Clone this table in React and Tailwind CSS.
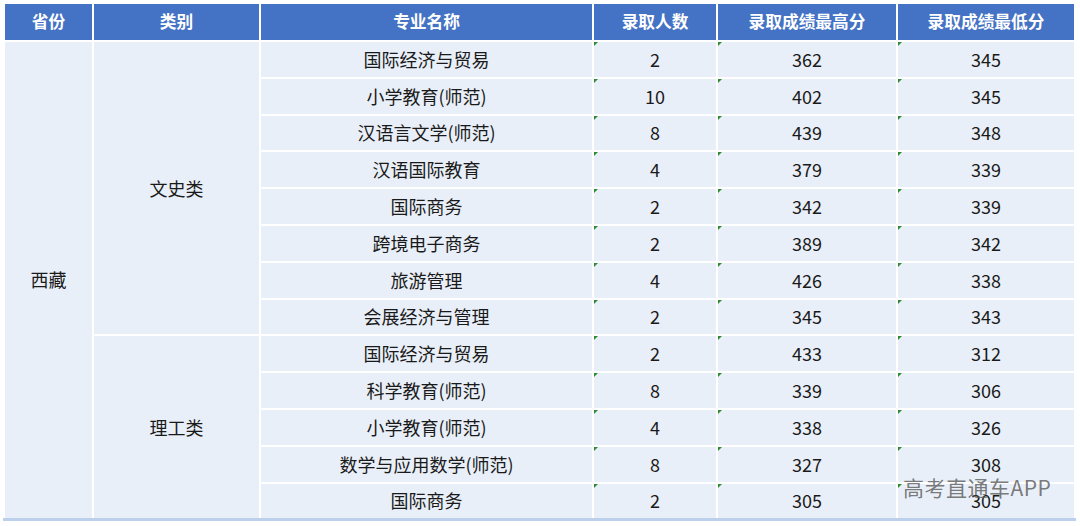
import React from "react";

const wenshi = [
  ["国际经济与贸易", "2", "362", "345"],
  ["小学教育(师范)", "10", "402", "345"],
  ["汉语言文学(师范)", "8", "439", "348"],
  ["汉语国际教育", "4", "379", "339"],
  ["国际商务", "2", "342", "339"],
  ["跨境电子商务", "2", "389", "342"],
  ["旅游管理", "4", "426", "338"],
  ["会展经济与管理", "2", "345", "343"],
];

const ligong = [
  ["国际经济与贸易", "2", "433", "312"],
  ["科学教育(师范)", "8", "339", "306"],
  ["小学教育(师范)", "4", "338", "326"],
  ["数学与应用数学(师范)", "8", "327", "308"],
  ["国际商务", "2", "305", "305"],
];

const headers = ["省份", "类别", "专业名称", "录取人数", "录取成绩最高分", "录取成绩最低分"];

const Mark = () => (
  <span className="absolute top-0 left-0 w-0 h-0 border-t-[4px] border-r-[4px] border-t-[#2e8b2e] border-r-transparent" />
);

const NumCell = ({ value }) => (
  <td className="relative border-2 border-white text-center">
    <Mark />
    {value}
  </td>
);

const App = () => {
  const renderRows = (rows, category, first) =>
    rows.map((r, i) => (
      <tr key={category + i} className="h-[36.8px]">
        {first && i === 0 && (
          <td rowSpan={13} className="border-2 border-white text-center">
            西藏
          </td>
        )}
        {i === 0 && (
          <td rowSpan={rows.length} className="border-2 border-white text-center">
            {category}
          </td>
        )}
        <td className="border-2 border-white text-center">{r[0]}</td>
        <NumCell value={r[1]} />
        <NumCell value={r[2]} />
        <NumCell value={r[3]} />
      </tr>
    ));

  return (
    <div
      className="relative w-[1080px] h-[526px] bg-white overflow-hidden pt-[4px] pl-[3px]"
      style={{ fontFamily: '"Noto Sans CJK SC", "Noto Sans", sans-serif' }}
    >
      <table className="table-fixed border-collapse bg-[#e9eff8] text-[18px] text-[#1a1a1a] border-b-[3px] border-b-[#bcd0ec]">
        <colgroup>
          <col className="w-[89px]" />
          <col className="w-[167px]" />
          <col className="w-[333px]" />
          <col className="w-[124px]" />
          <col className="w-[180px]" />
          <col className="w-[178px]" />
        </colgroup>
        <thead>
          <tr className="h-[37px] bg-[#4472c4] text-white text-[16.7px] font-bold">
            {headers.map((h) => (
              <th key={h} className="border-2 border-white border-t-0 font-bold text-center">
                {h}
              </th>
            ))}
          </tr>
        </thead>
        <tbody>
          {renderRows(wenshi, "文史类", true)}
          {renderRows(ligong, "理工类", false)}
        </tbody>
      </table>
      <div className="absolute left-[903px] top-[472px] text-[21px] text-[#5a5a5a]/80 tracking-[0.5px]">
        高考直通车APP
      </div>
    </div>
  );
};

export default App;
